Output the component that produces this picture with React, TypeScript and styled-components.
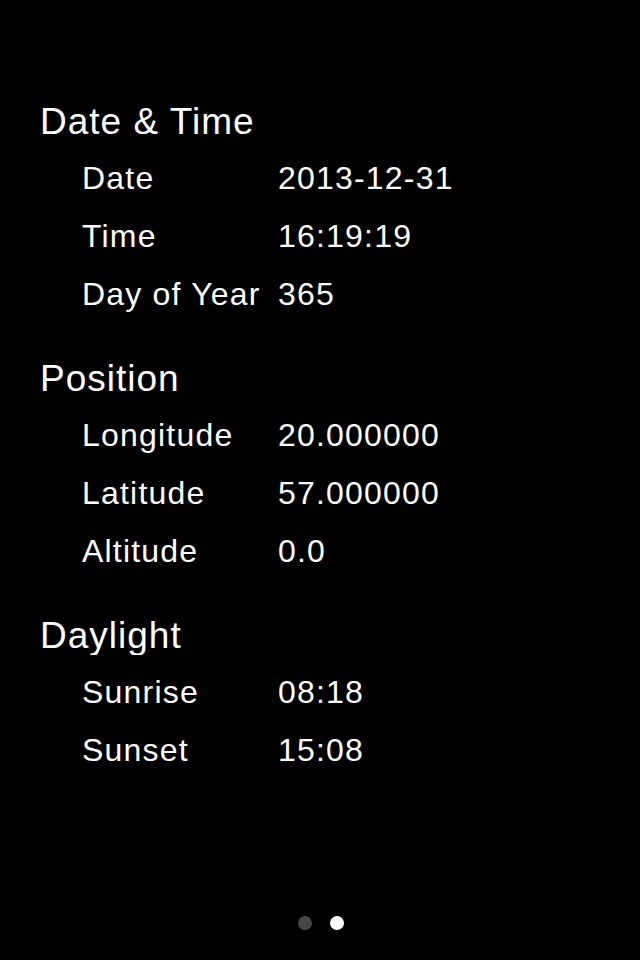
import React from 'react';
import styled, { createGlobalStyle } from 'styled-components';

type Row = { label: string; value: string };
type Section = { title: string; rows: Row[] };

const sections: Section[] = [
  {
    title: 'Date & Time',
    rows: [
      { label: 'Date', value: '2013-12-31' },
      { label: 'Time', value: '16:19:19' },
      { label: 'Day of Year', value: '365' },
    ],
  },
  {
    title: 'Position',
    rows: [
      { label: 'Longitude', value: '20.000000' },
      { label: 'Latitude', value: '57.000000' },
      { label: 'Altitude', value: '0.0' },
    ],
  },
  {
    title: 'Daylight',
    rows: [
      { label: 'Sunrise', value: '08:18' },
      { label: 'Sunset', value: '15:08' },
    ],
  },
];

const GlobalStyle = createGlobalStyle`
  html, body {
    margin: 0;
    padding: 0;
    background: #000;
  }
  body {
    font-family: "Liberation Sans", Arial, sans-serif;
    color: #fff;
  }
`;

const App = () => {
  return (
    <>
      <GlobalStyle />
      <Screen>
        <Content>
          {sections.map((section) => (
            <Group key={section.title}>
              <Header>{section.title}</Header>
              <Table>
                {section.rows.map((row) => (
                  <React.Fragment key={row.label}>
                    <Label>{row.label}</Label>
                    <Value>{row.value}</Value>
                  </React.Fragment>
                ))}
              </Table>
            </Group>
          ))}
        </Content>
        <Pager>
          <Dot />
          <Dot active />
        </Pager>
      </Screen>
    </>
  );
};

export default App;

const Screen = styled.div`
  width: 640px;
  height: 960px;
  background: #000;
  display: flex;
  flex-direction: column;
  box-sizing: border-box;
  padding: 95px 0 30px 40px;
`;

const Content = styled.div`
  display: flex;
  flex-direction: column;
  gap: 29px;
`;

const Group = styled.section`
  display: flex;
  flex-direction: column;
`;

const Header = styled.div`
  height: 46px;
  margin-bottom: 8px;
  line-height: 54px;
  font-size: 37px;
  letter-spacing: 1px;
  overflow: hidden;
  white-space: nowrap;
`;

const Table = styled.div`
  display: grid;
  grid-template-columns: 196px 1fr;
  grid-auto-rows: 58px;
  padding-left: 42px;
  font-size: 32px;
  line-height: 58px;
  letter-spacing: 1.2px;
`;

const Label = styled.div`
  white-space: nowrap;
`;

const Value = styled.div`
  white-space: nowrap;
`;

const Pager = styled.div`
  margin-top: auto;
  margin-left: -40px;
  padding-left: 2px;
  display: flex;
  justify-content: center;
  gap: 18px;
`;

const Dot = styled.span<{ active?: boolean }>`
  width: 14px;
  height: 14px;
  border-radius: 50%;
  background: ${({ active }) => (active ? '#fff' : '#464646')};
`;
